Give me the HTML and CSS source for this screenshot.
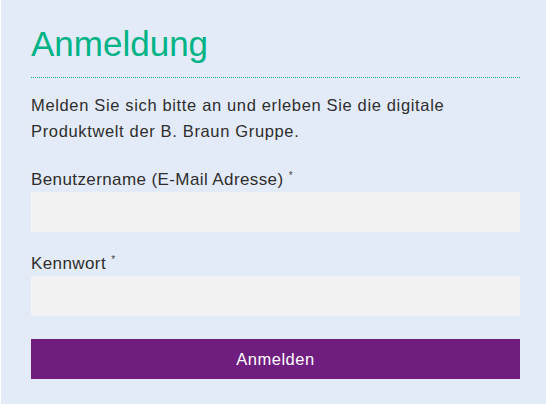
FILE: index.html
```html
<!DOCTYPE html>
<html lang="de">
<head>
<meta charset="utf-8">
<title>Anmeldung</title>
<link rel="stylesheet" href="styles.css">
</head>
<body>
<div class="panel">
  <h1 class="title">Anmeldung</h1>
  <p class="intro">Melden Sie sich bitte an und erleben Sie die digitale<br>Produktwelt der B. Braun Gruppe.</p>
  <form class="form">
    <div class="field">
      <label class="label">Benutzername (E-Mail Adresse) <sup class="req">*</sup></label>
      <input class="input" type="text">
    </div>
    <div class="field">
      <label class="label">Kennwort <sup class="req">*</sup></label>
      <input class="input" type="password">
    </div>
    <button class="button" type="button">Anmelden</button>
  </form>
</div>
</body>
</html>
```

FILE: styles.css
```css
html, body {
  margin: 0;
  padding: 0;
  background: #ffffff;
}
body {
  font-family: "Liberation Sans", Arial, sans-serif;
  color: #2e2e2e;
}
.panel {
  margin-left: 1px;
  height: 404px;
  box-sizing: border-box;
  background: #e4ebf8;
  padding: 24px 26px 0 30px;
}
.title {
  margin: 0;
  font-size: 35px;
  line-height: 40px;
  font-weight: normal;
  color: #00b386;
  padding-bottom: 13px;
  border-bottom: 1px dotted #00a98a;
}
.intro {
  margin: 14px 0 0;
  font-size: 16.5px;
  letter-spacing: 0.65px;
  line-height: 26px;
}
.form {
  display: flex;
  flex-direction: column;
  margin-top: 25px;
}
.field {
  display: flex;
  flex-direction: column;
  margin-bottom: 21px;
}
.label {
  font-size: 17px;
  letter-spacing: 0.4px;
  line-height: 22px;
  margin-bottom: 1px;
}
.req {
  font-size: 10px;
  line-height: 0;
  vertical-align: 6px;
  color: #444;
}
.input {
  height: 40px;
  box-sizing: border-box;
  border: 0;
  background: #f2f2f2;
  margin: 0;
  padding: 0 10px;
}
.button {
  margin-top: 2px;
  height: 40px;
  border: 0;
  background: #6f1d7f;
  color: #ffffff;
  font-family: "Liberation Sans", Arial, sans-serif;
  font-size: 16.5px;
  letter-spacing: 0.5px;
  padding: 0;
}
```
